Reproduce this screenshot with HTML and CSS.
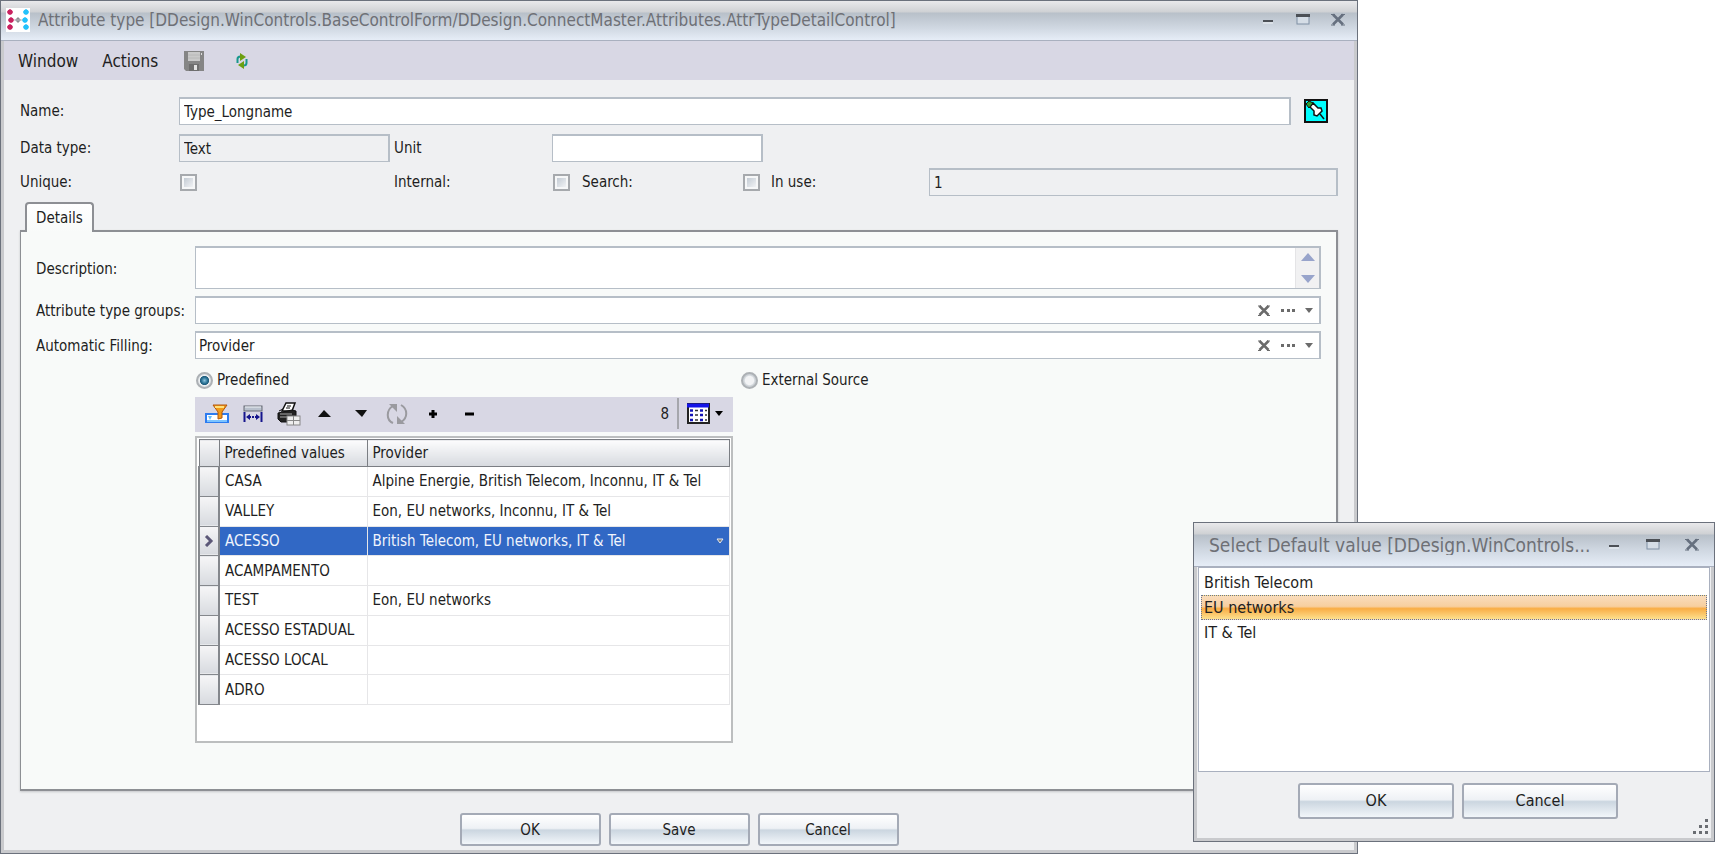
FILE: index.html
```
<!DOCTYPE html>
<html lang="en">
<head>
    <meta charset="UTF-8">
    <meta name="viewport" content="width=device-width, initial-scale=1.0">
    <title>Attribute type</title>
    <link rel="stylesheet" href="styles.css">
</head>
<body>
    <main class="window">
        <header class="titlebar">
            <svg class="logo" width="24" height="24" viewBox="0 0 24 24">
                <rect width="24" height="24" fill="#fff"/>
                <g fill="#c8215f"><path d="M4 1l3 3-3 3-3-3z"/><path d="M5 9l3 3-3 3-3-3z"/><path d="M4 16l3 3-3 3-3-3z"/><circle cx="4" cy="4" r="2.6"/><circle cx="5" cy="12" r="2.6"/><circle cx="4" cy="19" r="2.6"/></g>
                <g fill="#22c1fb"><path d="M20 1l3 3-3 3-3-3z"/><path d="M19 9l3 3-3 3-3-3z"/><path d="M20 16l3 3-3 3-3-3z"/><circle cx="20" cy="4" r="2.6"/><circle cx="19" cy="12" r="2.6"/><circle cx="20" cy="19" r="2.6"/></g>
                <path d="M12 9l3 3-3 3-3-3z" fill="#8a8d92"/>
                <path d="M8 12h8" stroke="#b9bcc0"/>
            </svg>
            <h1>Attribute type [DDesign.WinControls.BaseControlForm/DDesign.ConnectMaster.Attributes.AttrTypeDetailControl]</h1>
            <div class="window-buttons">
                <button type="button" aria-label="Minimize"><svg width="14" height="14" viewBox="0 0 14 14"><path d="M2 8h10" stroke="#4c5056" stroke-width="2"/><path d="M2 10h10" stroke="#eef2f6"/></svg></button>
                <button type="button" aria-label="Maximize"><svg width="14" height="14" viewBox="0 0 14 14"><rect x="1" y="2" width="12" height="9" fill="#d5dde6" stroke="#7f8fa4"/><path d="M0 2.500h14" stroke="#4c5056" stroke-width="3"/></svg></button>
                <button type="button" aria-label="Close"><svg width="14" height="14" viewBox="0 0 14 14"><path d="M2 1.500l10 10M12 1.500l-10 10" stroke="#66707f" stroke-width="2.600"/><path d="M0 1.500h4M10 1.500h4M0 12h4M10 12h4" stroke="#66707f"/></svg></button>
            </div>
        </header>

        <nav class="menu">
            <button type="button">Window</button>
            <button type="button">Actions</button>
            <button type="button" class="menu-icon" aria-label="Save">
                <svg width="20" height="20" viewBox="0 0 20 20"><path d="M0 0h20v20H2l-2-2z" fill="#858585"/><rect x="4" y="1" width="12" height="9" fill="#c9c9c9"/><path d="M4 4h12M4 7h12" stroke="#b8b8b8"/><rect x="5" y="13" width="10" height="7" fill="#6e6e6e"/><rect x="10" y="14" width="3" height="5" fill="#e2e2e2"/><rect x="17" y="2" width="1" height="2" fill="#ddd"/></svg>
            </button>
            <button type="button" class="menu-icon" aria-label="Refresh">
                <svg width="12" height="16" viewBox="0 0 12 16"><path d="M1.500 10V6q0-2.500 3-2.500" fill="none" stroke="#17988c" stroke-width="2"/><path d="M4 0l6 4-6 4z" fill="#6c9f10"/><path d="M10.500 6v4q0 2.500-3 2.500" fill="none" stroke="#17988c" stroke-width="2"/><path d="M8 8l-6 4 6 4z" fill="#6c9f10"/></svg>
            </button>
        </nav>

        <form class="content">
            <div class="name-row">
                <label for="name">Name:</label>
                <input type="text" id="name" class="field" value="Type_Longname">
                <button type="button" class="pin" aria-label="Pin">
                    <svg width="24" height="24" viewBox="0 0 24 24"><rect x="1" y="1" width="22" height="22" fill="#0ff" stroke="#111" stroke-width="2"/><path d="M6 8l3-4 5 5 3 0 1 3-5 5-3-1v-4z" fill="#fff" stroke="#111" stroke-width="1.500"/><path d="M2 5l3-3 4 2-4 5z" fill="#32a032" stroke="#111"/><path d="M16 15l4 5" stroke="#111" stroke-width="1.500"/></svg>
                </button>
            </div>
            <div class="form-grid">
                <label for="dataType">Data type:</label>
                <input type="text" id="dataType" class="field short" value="Text" readonly>
                <label for="unit">Unit</label>
                <input type="text" id="unit" class="field short unit">
            </div>
            <div class="form-grid">
                <label for="unique">Unique:</label>
                <input type="checkbox" id="unique">
                <label for="internal">Internal:</label>
                <input type="checkbox" id="internal">
                <label for="search">Search:</label>
                <input type="checkbox" id="search">
                <label for="inUse">In use:</label>
                <input type="text" id="inUse" class="field" value="1" readonly>
            </div>

            <div class="tabs">
                <button type="button" class="tab">Details</button>
            </div>
            <section class="panel">
                <div class="detail-row">
                    <label for="description">Description:</label>
                    <div class="field memo">
                        <textarea id="description"></textarea>
                        <div class="scroll">
                            <button type="button" aria-label="Scroll up"><svg width="14" height="8" viewBox="0 0 14 8"><path d="M0 8l7-8 7 8z" fill="#98a4cb"/></svg></button>
                            <button type="button" aria-label="Scroll down"><svg width="14" height="8" viewBox="0 0 14 8"><path d="M0 0l7 8 7-8z" fill="#98a4cb"/></svg></button>
                        </div>
                    </div>
                </div>
                <div class="detail-row">
                    <label for="groups">Attribute type groups:</label>
                    <div class="field combo">
                        <input type="text" id="groups">
                        <button type="button" aria-label="Clear"><svg width="14" height="12" viewBox="0 0 14 12"><path d="M2.500 1l9 9M11.500 1l-9 9" stroke="#6b6b6b" stroke-width="2.500"/><path d="M1 1h3M10 1h3M1 10.500h3M10 10.500h3" stroke="#6b6b6b"/></svg></button>
                        <button type="button" aria-label="Browse"><svg width="16" height="4" viewBox="0 0 16 4"><path d="M1 0h3v3H1zM7 0h3v3H7zM12 0h3v3h-3z" fill="#6b6b6b"/></svg></button>
                        <button type="button" aria-label="Open list"><svg width="8" height="5" viewBox="0 0 8 5"><path d="M0 0h8L4 5z" fill="#6b6b6b"/></svg></button>
                    </div>
                </div>
                <div class="detail-row">
                    <label for="filling">Automatic Filling:</label>
                    <div class="field combo">
                        <input type="text" id="filling" value="Provider">
                        <button type="button" aria-label="Clear"><svg width="14" height="12" viewBox="0 0 14 12"><path d="M2.500 1l9 9M11.500 1l-9 9" stroke="#6b6b6b" stroke-width="2.500"/><path d="M1 1h3M10 1h3M1 10.500h3M10 10.500h3" stroke="#6b6b6b"/></svg></button>
                        <button type="button" aria-label="Browse"><svg width="16" height="4" viewBox="0 0 16 4"><path d="M1 0h3v3H1zM7 0h3v3H7zM12 0h3v3h-3z" fill="#6b6b6b"/></svg></button>
                        <button type="button" aria-label="Open list"><svg width="8" height="5" viewBox="0 0 8 5"><path d="M0 0h8L4 5z" fill="#6b6b6b"/></svg></button>
                    </div>
                </div>

                <div class="source">
                    <label class="radio"><input type="radio" name="source" checked>Predefined</label>
                    <label class="radio"><input type="radio" name="source">External Source</label>
                </div>

                <div class="values">
                    <div class="toolbar">
                        <button type="button" aria-label="Filter">
                            <svg width="24" height="20" viewBox="0 0 24 20"><rect x="1" y="10" width="22" height="8" fill="#fff" stroke="#2d7cf0" stroke-width="2"/><path d="M2 17h20" stroke="#7cc4ff" stroke-width="2"/><path d="M3 12h4l-2 4z" fill="#6cc0f8"/><path d="M8 1h14l-5 7v6l-4 1V8z" fill="#f29a18" stroke="#b4560c"/><path d="M10 3h9" stroke="#ffe07a" stroke-width="2"/></svg>
                        </button>
                        <button type="button" aria-label="Best fit">
                            <svg width="20" height="20" viewBox="0 0 20 20"><rect x="1" y="2" width="18" height="5" fill="#b8c0cc" stroke="#666b74"/><path d="M2 3h16" stroke="#eef1f5"/><path d="M1.500 8v10M18.500 8v10" stroke="#15158c" stroke-width="2"/><path d="M3 13l4-3v6zM17 13l-4-3v6z" fill="#15158c"/><path d="M6 13h2M9 13h2M12 13h2" stroke="#15158c" stroke-width="2"/></svg>
                        </button>
                        <button type="button" aria-label="Print">
                            <svg width="24" height="24" viewBox="0 0 24 24"><path d="M9 1h9l-3 8H5z" fill="#fff" stroke="#111" stroke-width="1.500"/><path d="M10 4h4M9 6h4" stroke="#111"/><path d="M2 9l4-2M15 8l4 1v8l-5 3H4l-3-3v-6z" fill="#222" stroke="#111"/><path d="M3 12h12M3 15h11" stroke="#aaa"/><rect x="10" y="14" width="13" height="9" fill="#eee" stroke="#888"/><path d="M10 18.500h13M16.500 14v9" stroke="#888"/></svg>
                        </button>
                        <button type="button" aria-label="Move up"><svg width="14" height="8" viewBox="0 0 14 8"><path d="M0 7l6-7 7 7z" fill="#111"/></svg></button>
                        <button type="button" aria-label="Move down"><svg width="14" height="8" viewBox="0 0 14 8"><path d="M1 0h12L8 7z" fill="#111"/></svg></button>
                        <button type="button" aria-label="Reload">
                            <svg width="22" height="22" viewBox="0 0 22 22"><path d="M7 20C0 17 0 7 7 3M15 2c7 4 7 13 0 17" fill="none" stroke="#9a9a9f" stroke-width="2"/><path d="M3 1h8v8zM19 21h-8v-8z" fill="#9a9a9f"/></svg>
                        </button>
                        <button type="button" aria-label="Add"><svg width="10" height="10" viewBox="0 0 10 10"><path d="M5 1v8M1 5h8" stroke="#000" stroke-width="3"/></svg></button>
                        <button type="button" aria-label="Remove"><svg width="10" height="10" viewBox="0 0 10 10"><path d="M1 5h9" stroke="#000" stroke-width="3"/></svg></button>
                        <span class="count">8</span>
                        <button type="button" class="columns" aria-label="Columns">
                            <svg width="23" height="21" viewBox="0 0 23 21"><rect x="1" y="1" width="21" height="19" fill="#fff" stroke="#222" stroke-width="2"/><path d="M0 2.500h22" stroke="#1414e8" stroke-width="4"/><path d="M3 7.500h3M3 12h3M3 17h3M13 7.500h3M13 12h3M13 17h3" stroke="#1414b8" stroke-width="2.500"/><path d="M8 7.500h3M8 12h3M8 17h3M18 7.500h2M18 12h2M18 17h2" stroke="#333" stroke-width="1.500"/></svg>
                            <svg width="8" height="5" viewBox="0 0 8 5"><path d="M0 0h8L4 5z"/></svg>
                        </button>
                    </div>
                    <div class="grid-box">
                        <table>
                            <thead>
                                <tr><th class="mark"></th><th class="key">Predefined values</th><th>Provider</th></tr>
                            </thead>
                            <tbody>
                                <tr><td class="mark"></td><td>CASA</td><td>Alpine Energie, British Telecom, Inconnu, IT &amp; Tel</td></tr>
                                <tr><td class="mark"></td><td>VALLEY</td><td>Eon, EU networks, Inconnu, IT &amp; Tel</td></tr>
                                <tr class="selected">
                                    <td class="mark"><svg width="10" height="12" viewBox="0 0 10 12"><path d="M2 1l5 5-5 5" fill="none" stroke="#5c5878" stroke-width="3"/></svg></td>
                                    <td>ACESSO</td>
                                    <td><div class="cell-edit">British Telecom, EU networks, IT &amp; Tel<button type="button" aria-label="Choose providers"><svg width="8" height="6" viewBox="0 0 8 6"><path d="M1 1h6L4 5z" fill="#777" stroke="#e6eaf2"/></svg></button></div></td>
                                </tr>
                                <tr><td class="mark"></td><td>ACAMPAMENTO</td><td></td></tr>
                                <tr><td class="mark"></td><td>TEST</td><td>Eon, EU networks</td></tr>
                                <tr><td class="mark"></td><td>ACESSO ESTADUAL</td><td></td></tr>
                                <tr><td class="mark"></td><td>ACESSO LOCAL</td><td></td></tr>
                                <tr><td class="mark"></td><td>ADRO</td><td></td></tr>
                            </tbody>
                        </table>
                    </div>
                </div>
            </section>

            <div class="buttons">
                <button type="button" class="btn">OK</button>
                <button type="button" class="btn">Save</button>
                <button type="button" class="btn">Cancel</button>
            </div>
        </form>
    </main>

    <section class="window dialog" role="dialog" aria-labelledby="dialogTitle">
        <header class="titlebar">
            <h2 id="dialogTitle">Select Default value [DDesign.WinControls...</h2>
            <div class="window-buttons">
                <button type="button" aria-label="Minimize"><svg width="14" height="14" viewBox="0 0 14 14"><path d="M2 8h10" stroke="#4c5056" stroke-width="2"/><path d="M2 10h10" stroke="#eef2f6"/></svg></button>
                <button type="button" aria-label="Maximize"><svg width="14" height="14" viewBox="0 0 14 14"><rect x="1" y="2" width="12" height="9" fill="#d5dde6" stroke="#7f8fa4"/><path d="M0 2.500h14" stroke="#4c5056" stroke-width="3"/></svg></button>
                <button type="button" aria-label="Close"><svg width="14" height="14" viewBox="0 0 14 14"><path d="M2 1.500l10 10M12 1.500l-10 10" stroke="#66707f" stroke-width="2.600"/><path d="M0 1.500h4M10 1.500h4M0 12h4M10 12h4" stroke="#66707f"/></svg></button>
            </div>
        </header>
        <ul class="list" role="listbox">
            <li role="option">British Telecom</li>
            <li role="option" class="active" aria-selected="true">EU networks</li>
            <li role="option">IT &amp; Tel</li>
        </ul>
        <div class="buttons">
            <button type="button" class="btn">OK</button>
            <button type="button" class="btn">Cancel</button>
        </div>
        <svg class="grip" width="16" height="16" viewBox="0 0 16 16"><path d="M13 0h3v3h-3zM7 6h3v3H7zM13 6h3v3h-3zM1 12h3v3H1zM7 12h3v3H7zM13 12h3v3h-3z" fill="#6a6d72"/></svg>
    </section>
</body>
</html>
```
FILE: styles.css
```
* { box-sizing: border-box; }
body { margin: 0; background: #fff; color: #1e1e22; font-family: "DejaVu Sans Condensed", "DejaVu Sans", sans-serif; font-size: 15px; font-stretch: condensed; line-height: 20px; }
button, input, textarea { font: inherit; color: inherit; }
button { padding: 0; border: none; background: none; }
svg { display: block; flex: none; }

/* windows */
.window { display: flex; flex-direction: column; width: calc(100% - 357px); min-height: 100vh; background: #eff0f2; border: 1px solid #6b717c; box-shadow: inset 0 0 0 3px #c9cacd; }
.titlebar { display: flex; align-items: center; gap: 8px; height: 40px; padding: 0 12px 2px 5px; border-bottom: 1px solid #a9b0bf; background: linear-gradient(#e9e9eb 0, #cfd1d4 11px, #b8c0c9 12px, #ced6e0 26px, #e6edf7 100%); }
.titlebar h1, .titlebar h2 { flex: 1; margin: 0; font-size: 17px; font-weight: normal; color: #6e7076; white-space: nowrap; overflow: hidden; }
.window-buttons { display: flex; gap: 21px; }

.menu { display: flex; align-items: center; gap: 24px; height: 39px; margin: 0 3px; padding: 0 14px; background: #d8d7e4; font-size: 17px; }
.menu-icon { margin: 0 2px; }
.menu-icon + .menu-icon { margin-left: 6px; }

/* form */
.content { display: flex; flex-direction: column; flex: 1; padding: 17px 19px 7px; }
.field { width: 100%; height: 28px; padding: 0 4px; border: 2px solid #b6bec7; border-width: 2px 2px 1px 1px; background: #fff; outline: none; }
.field[readonly] { background: #eff0f2; }
.name-row { display: grid; grid-template-columns: 159px 1fr 24px; align-items: center; margin: 0 10px 9px 0; }
.name-row .field { width: calc(100% - 13px); }
.form-grid { display: grid; grid-template-columns: 159px 215px 158px 30px 160px 29px 158px 1fr; align-items: center; margin-bottom: 6px; }
.short { width: 211px; }
.unit { grid-column: span 3; }

input[type="checkbox"] { appearance: none; width: 17px; height: 17px; margin: 0 1px; border: 2px solid #a6a9ad; background: linear-gradient(135deg, #b9c2cc, #fbfbfc); box-shadow: inset 0 0 0 2px #f6f7f8; }

.tabs { height: 28px; padding-left: 5px; }
.tab { position: relative; width: 69px; height: 30px; border: 2px solid #8d8f94; border-bottom: none; border-radius: 4px 4px 0 0; background: linear-gradient(#fff, #f8faf9); }
.panel { flex: 1; padding: 14px 15px 46px; border: 2px solid #8d8f94; border-left-width: 1px; background: #f8faf9; box-shadow: 0 1px 2px #c5c6c9; }
.detail-row { display: grid; grid-template-columns: 159px 1fr; align-items: center; margin-bottom: 7px; }
.detail-row label { padding-top: 2px; white-space: nowrap; }
.memo { display: flex; height: 43px; padding: 0; }
.memo textarea { flex: 1; border: none; outline: none; resize: none; background: none; }
.scroll { display: flex; flex-direction: column; justify-content: space-between; align-items: center; width: 24px; padding: 5px 0; border-left: 1px solid #e4e4e6; background: #f1f1f2; }
.combo { display: flex; align-items: center; gap: 9px; padding: 0 6px 0 0; }
.combo input { flex: 1; padding: 0 3px; border: none; outline: none; background: none; }

.source { display: grid; grid-template-columns: 545px 1fr; margin: 11px 0 7px 159px; }
.radio { display: flex; align-items: center; gap: 4px; }
input[type="radio"] { appearance: none; width: 17px; height: 17px; margin: 0 0 0 1px; border: 2px solid #adb1b5; border-radius: 50%; background: radial-gradient(#f2f3f5 45%, #cdd2d7 60%); }
input[type="radio"]:checked { background: radial-gradient(#8fc4dd 0, #2b7497 32%, #205c7c 46%, #eef1f3 54%, #dde1e5 68%); }

/* predefined values */
.values { width: 538px; margin-left: 159px; }
.toolbar { display: flex; align-items: center; height: 35px; margin-bottom: 4px; padding: 0 10px 2px 4px; background: #d8d7e4; }
.toolbar > button { display: flex; justify-content: center; width: 36px; }
.count { margin-left: auto; padding-right: 8px; }
.toolbar .columns { align-items: center; gap: 5px; width: 46px; height: 31px; padding-left: 8px; border-left: 2px solid #a5a6ac; }
.grid-box { height: 307px; padding: 1px; border: 2px solid #bcbebf; background: #fff; }
table { width: 100%; height: 266px; border-collapse: collapse; table-layout: fixed; }
th, td { height: 29px; padding: 0 5px; border: 1px solid #e6e6e8; text-align: left; font-weight: normal; white-space: nowrap; }
th { height: 27px; border-color: #7b7e83; background: linear-gradient(#fcfcfd, #d7dadf); }
.mark { width: 20px; padding: 0; background: linear-gradient(#f6f6f7, #d7dadf); }
td.mark { border: 2px solid #84878c; border-width: 1px 2px; }
.mark svg { margin: 0 auto; }
.key { width: 148px; }
.selected td:not(.mark) { background: #3168c5; color: #f0f4fc; }
.cell-edit { display: flex; align-items: center; justify-content: space-between; }

/* buttons */
.buttons { display: flex; justify-content: center; gap: 8px; padding-top: 22px; }
.btn { width: 141px; height: 33px; border: 2px solid #a4aab6; border-radius: 3px; background: linear-gradient(#fff 0, #eef1f5 46%, #cbd6e0 52%, #f2f6fa 100%); }

/* default value dialog */
.dialog { position: absolute; right: 0; bottom: 12px; width: 522px; min-height: 0; font-size: 16px; }
.dialog .titlebar { height: 44px; padding: 0 15px 0 15px; }
.dialog .titlebar h2 { font-size: 19px; }
.dialog .window-buttons { gap: 25px; }
.list { height: 205px; margin: 0 4px; padding: 2px; border: 1px solid #a9b0bf; background: #fff; list-style: none; }
.list li { height: 25px; padding: 0 3px; line-height: 25px; }
.list .active { border: 1px dotted #6d7690; padding: 0 2px; line-height: 23px; background: linear-gradient(#f9dcbc 0, #f7cf9f 45%, #f9ad45 55%, #fde08e 100%); }
.dialog .buttons { padding: 11px 0 22px 8px; }
.dialog .btn { width: 156px; height: 36px; }
.grip { position: absolute; right: 6px; bottom: 6px; }
```
